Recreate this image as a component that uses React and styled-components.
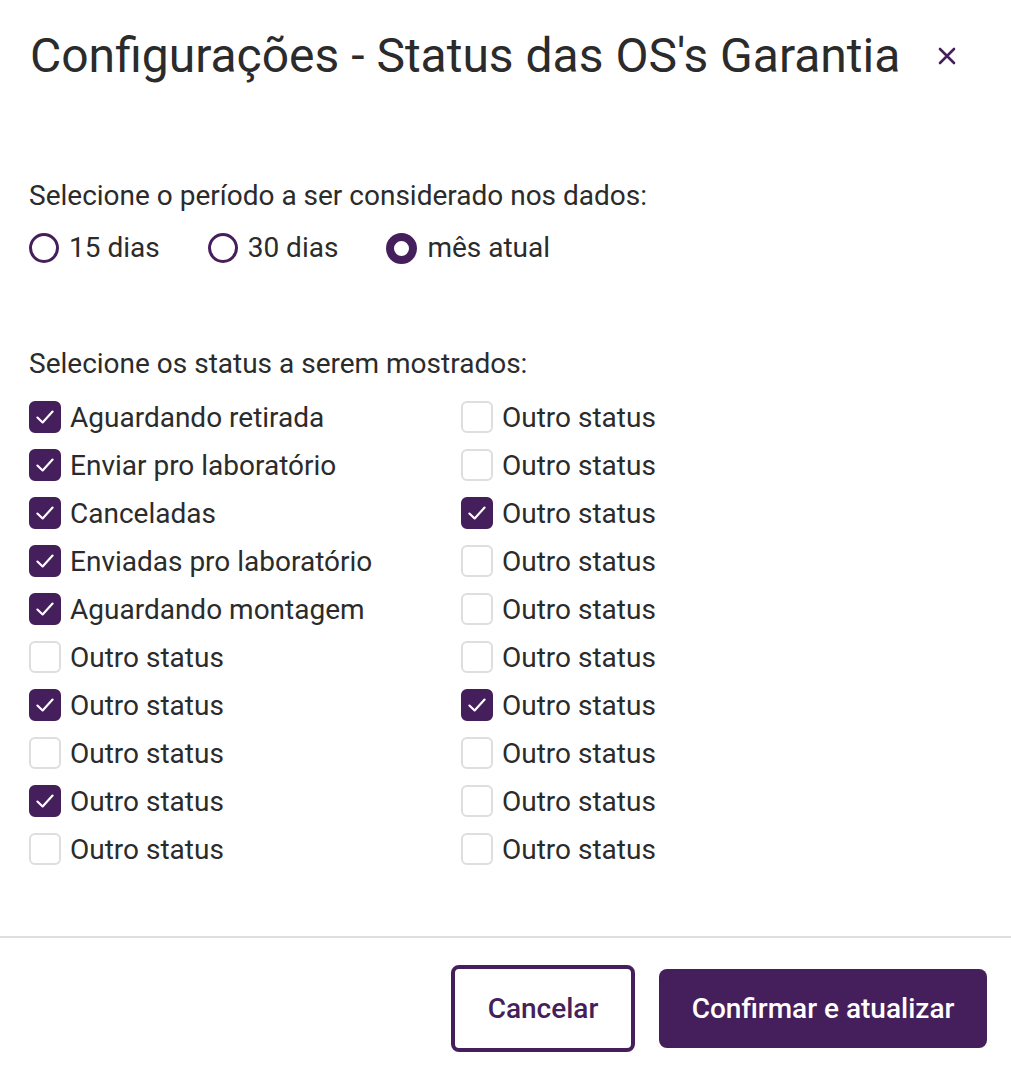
import styled, { createGlobalStyle } from "styled-components";

const purple = "#451f5b";

const GlobalStyle = createGlobalStyle`
  body {
    margin: 0;
    background: #ffffff;
    font-family: Roboto, "Noto Sans", Arial, sans-serif;
    color: #2b2b2b;
  }
  * { box-sizing: border-box; }
`;

const statusLeft = [
  { label: "Aguardando retirada", checked: true },
  { label: "Enviar pro laboratório", checked: true },
  { label: "Canceladas", checked: true },
  { label: "Enviadas pro laboratório", checked: true },
  { label: "Aguardando montagem", checked: true },
  { label: "Outro status", checked: false },
  { label: "Outro status", checked: true },
  { label: "Outro status", checked: false },
  { label: "Outro status", checked: true },
  { label: "Outro status", checked: false },
];

const statusRight = [false, false, true, false, false, false, true, false, false, false];

function App() {
  const rows = [];
  statusLeft.forEach((item, i) => {
    rows.push({ label: item.label, checked: item.checked });
    rows.push({ label: "Outro status", checked: statusRight[i] });
  });

  return (
    <Modal>
      <GlobalStyle />
      <Header>
        <Title>Configurações - Status das OS's Garantia</Title>
        <CloseButton aria-label="Fechar">
          <svg width="20" height="20" viewBox="0 0 20 20">
            <path d="M3 3 L17 17 M17 3 L3 17" stroke={purple} strokeWidth="2.6" strokeLinecap="round" />
          </svg>
        </CloseButton>
      </Header>

      <Body>
        <Label>Selecione o período a ser considerado nos dados:</Label>
        <RadioGroup>
          <RadioOption>
            <Radio />
            15 dias
          </RadioOption>
          <RadioOption>
            <Radio />
            30 dias
          </RadioOption>
          <RadioOption>
            <Radio $checked />
            mês atual
          </RadioOption>
        </RadioGroup>

        <Label $top={80}>Selecione os status a serem mostrados:</Label>
        <StatusGrid>
          {rows.map((row, i) => (
            <CheckOption key={i}>
              <Checkbox $checked={row.checked}>
                {row.checked && (
                  <svg width="26" height="26" viewBox="0 0 24 24">
                    <path d="M5 12.5 L9.8 17 L19 7" fill="none" stroke="#fff" strokeWidth="2" strokeLinecap="round" strokeLinejoin="round" />
                  </svg>
                )}
              </Checkbox>
              {row.label}
            </CheckOption>
          ))}
        </StatusGrid>
      </Body>

      <Footer>
        <OutlineButton>Cancelar</OutlineButton>
        <PrimaryButton>Confirmar e atualizar</PrimaryButton>
      </Footer>
    </Modal>
  );
}

export default App;

const Modal = styled.div`
  width: 1011px;
  height: 1067px;
  background: #fff;
  display: flex;
  flex-direction: column;
`;

const Header = styled.header`
  display: flex;
  align-items: center;
  justify-content: space-between;
  padding: 26px 54px 0 30px;
`;

const Title = styled.h1`
  margin: 0;
  font-size: 48px;
  font-weight: 400;
  line-height: 60px;
  color: #2b2b2b;
`;

const CloseButton = styled.button`
  border: none;
  background: none;
  padding: 0;
  width: 20px;
  height: 20px;
  display: flex;
  cursor: pointer;
`;

const Body = styled.main`
  flex: 1;
  padding: 0 29px;
`;

const Label = styled.p`
  margin: ${(p) => p.$top ?? 92}px 0 0;
  font-size: 28px;
  line-height: 36px;
`;

const RadioGroup = styled.div`
  display: flex;
  gap: 48px;
  margin-top: 16px;
`;

const RadioOption = styled.label`
  display: flex;
  align-items: center;
  gap: 10px;
  font-size: 28px;
  line-height: 36px;
  cursor: pointer;
`;

const Radio = styled.span`
  width: ${(p) => (p.$checked ? 31 : 30)}px;
  height: ${(p) => (p.$checked ? 31 : 30)}px;
  border-radius: 50%;
  border: ${(p) => (p.$checked ? "8px" : "3px")} solid ${purple};
  flex-shrink: 0;
`;

const StatusGrid = styled.div`
  display: grid;
  grid-template-columns: 432px 1fr;
  grid-auto-rows: 48px;
  margin-top: 11px;
`;

const CheckOption = styled.label`
  display: flex;
  align-items: center;
  gap: 9px;
  font-size: 28px;
  cursor: pointer;
`;

const Checkbox = styled.span`
  width: 32px;
  height: 32px;
  border-radius: 6px;
  flex-shrink: 0;
  display: flex;
  align-items: center;
  justify-content: center;
  background: ${(p) => (p.$checked ? purple : "#fff")};
  border: 2px solid ${(p) => (p.$checked ? purple : "#dedede")};
`;

const Footer = styled.footer`
  border-top: 2px solid #dedede;
  display: flex;
  justify-content: flex-end;
  align-items: center;
  gap: 24px;
  padding: 27px 24px 15px;
`;

const Button = styled.button`
  font-family: Roboto, "Noto Sans", Arial, sans-serif;
  font-size: 28px;
  font-weight: 500;
  border-radius: 8px;
  cursor: pointer;
`;

const OutlineButton = styled(Button)`
  width: 184px;
  height: 87px;
  background: #fff;
  color: ${purple};
  border: 4px solid ${purple};
`;

const PrimaryButton = styled(Button)`
  width: 328px;
  height: 79px;
  background: ${purple};
  color: #fff;
  border: none;
`;
